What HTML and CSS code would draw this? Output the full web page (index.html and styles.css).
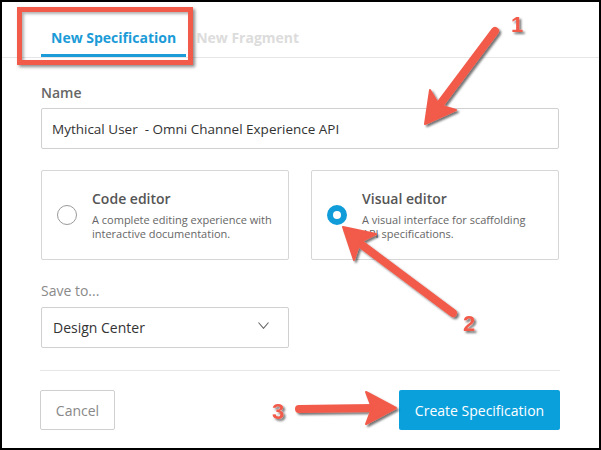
FILE: index.html
```html
<!DOCTYPE html>
<html lang="en">
<head>
<meta charset="utf-8">
<title>New Specification</title>
<link rel="stylesheet" href="styles.css">
</head>
<body>
<div class="screen">
  <div class="dialog">
    <nav class="tabs">
      <div class="tab active">New Specification</div>
      <div class="tab">New Fragment</div>
    </nav>
    <div class="body">
      <div class="label">Name</div>
      <div class="input">Mythical User&nbsp; - Omni Channel Experience API</div>
      <div class="options">
        <div class="option">
          <span class="radio"></span>
          <div class="opt-text">
            <div class="opt-title">Code editor</div>
            <div class="opt-desc">A complete editing experience with<br>interactive documentation.</div>
          </div>
        </div>
        <div class="option">
          <span class="radio checked"></span>
          <div class="opt-text">
            <div class="opt-title">Visual editor</div>
            <div class="opt-desc">A visual interface for scaffolding<br>API specifications.</div>
          </div>
        </div>
      </div>
      <div class="label muted">Save to...</div>
      <div class="select">
        <span>Design Center</span>
        <svg class="chev" width="11" height="7" viewBox="0 0 11 7"><polyline points="0.5,0.5 5.5,6.3 10.5,0.5" fill="none" stroke="#666" stroke-width="1.1"/></svg>
      </div>
    </div>
    <footer class="footer">
      <button class="btn cancel">Cancel</button>
      <button class="btn primary">Create Specification</button>
    </footer>
  </div>
  <div class="highlight"></div>
  <svg class="annotations" width="601" height="450" viewBox="0 0 601 450">
    <defs>
      <filter id="sh" x="-30%" y="-30%" width="160%" height="160%">
        <feDropShadow dx="2" dy="2" stdDeviation="1.2" flood-color="#000" flood-opacity="0.55"/>
      </filter>
    </defs>
    <g filter="url(#sh)" fill="#f25a4a" stroke="#f25a4a" stroke-linejoin="round">
      <line x1="495" y1="31" x2="441" y2="103" stroke-width="8" stroke-linecap="round"/>
      <polygon points="425,124 430,90 439,105 456,110" stroke-width="2"/>
      <line x1="453" y1="313" x2="362" y2="245" stroke-width="8" stroke-linecap="round"/>
      <polygon points="343,227 376,234 360,242 354,260" stroke-width="2"/>
      <line x1="299" y1="409" x2="374" y2="408" stroke-width="8" stroke-linecap="round"/>
      <polygon points="396,408 366,392 372,408 366,424" stroke-width="2"/>
    </g>
    <g filter="url(#sh)" class="num">
      <text x="511" y="32">1</text>
      <text x="463" y="331">2</text>
      <text x="272" y="419">3</text>
    </g>
  </svg>
</div>
</body>
</html>
```
FILE: styles.css
```css
* { box-sizing: border-box; }
html, body { margin: 0; padding: 0; background: #fff; }
body { font-family: "Open Sans", "Liberation Sans", sans-serif; }

.screen {
  position: relative;
  width: 601px;
  height: 450px;
}

.dialog {
  width: 601px;
  height: 450px;
  border: 2px solid #000;
  background: #fff;
  display: flex;
  flex-direction: column;
}

.tabs {
  display: flex;
  padding-left: 39px;
  border-bottom: 1px solid #e6e6e6;
}
.tab {
  padding: 26px 10px 6px;
  line-height: 20px;
  font-size: 14px;
  font-weight: 700;
  color: #dcdcdc;
  border-bottom: 3px solid transparent;
}
.tab.active {
  color: #1b9bd7;
  border-bottom-color: #1b9bd7;
}

.body {
  padding: 25px 40px 0 39px;
  display: flex;
  flex-direction: column;
}
.label {
  font-size: 14px;
  line-height: 20px;
  font-weight: 600;
  color: #666;
  margin-bottom: 5px;
}
.label.muted {
  font-weight: 400;
  color: #8a8a8a;
  margin-top: 21px;
  margin-bottom: 6px;
}
.input {
  height: 41px;
  border: 1px solid #d0d0d0;
  border-radius: 2px;
  padding: 0 10px;
  display: flex;
  align-items: center;
  font-size: 13.5px;
  color: #333;
}

.options {
  margin-top: 21px;
  display: grid;
  grid-template-columns: 248px 248px;
  gap: 22px;
}
.option {
  height: 90px;
  border: 1px solid #d6d6d6;
  border-radius: 2px;
  display: flex;
  align-items: center;
  padding-left: 15px;
  gap: 15px;
}
.radio {
  flex: none;
  width: 20px;
  height: 20px;
  border-radius: 50%;
  border: 1px solid #9a9a9a;
  background: #fff;
}
.radio.checked {
  border: 6px solid #0f9cd9;
}
.opt-text {
  white-space: nowrap;
}
.opt-title {
  font-size: 14px;
  line-height: 20px;
  font-weight: 600;
  color: #555;
  margin-bottom: 4px;
}
.opt-desc {
  font-size: 11px;
  line-height: 14px;
  color: #666;
}

.select {
  width: 248px;
  height: 41px;
  border: 1px solid #d0d0d0;
  border-radius: 2px;
  padding: 0 19px 0 11px;
  display: flex;
  align-items: center;
  justify-content: space-between;
  font-size: 14px;
  color: #333;
}
.chev { margin-top: -4px; }

.footer {
  margin: 22px 39px 0 38px;
  padding-top: 19px;
  border-top: 1px solid #e6e6e6;
  display: flex;
  justify-content: space-between;
}
.btn {
  height: 40px;
  border-radius: 2px;
  font-family: "Open Sans", "Liberation Sans", sans-serif;
  font-size: 14px;
  cursor: pointer;
}
.btn.cancel {
  width: 75px;
  background: #fff;
  border: 1px solid #cfcfcf;
  color: #888;
}
.btn.primary {
  width: 161px;
  background: #0aa0dc;
  border: none;
  color: #fff;
}

.highlight {
  position: absolute;
  left: 17px;
  top: 7px;
  width: 176px;
  height: 58px;
  border: 5px solid #f25a4a;
  box-shadow: 2px 2px 3px rgba(0, 0, 0, 0.45), inset 2px 2px 3px rgba(0, 0, 0, 0.3);
}

.annotations {
  position: absolute;
  left: 0;
  top: 0;
  pointer-events: none;
}
.num text {
  font-family: "Liberation Sans", Arial, sans-serif;
  font-weight: 700;
  font-size: 22px;
  fill: #f25a4a;
}
```
